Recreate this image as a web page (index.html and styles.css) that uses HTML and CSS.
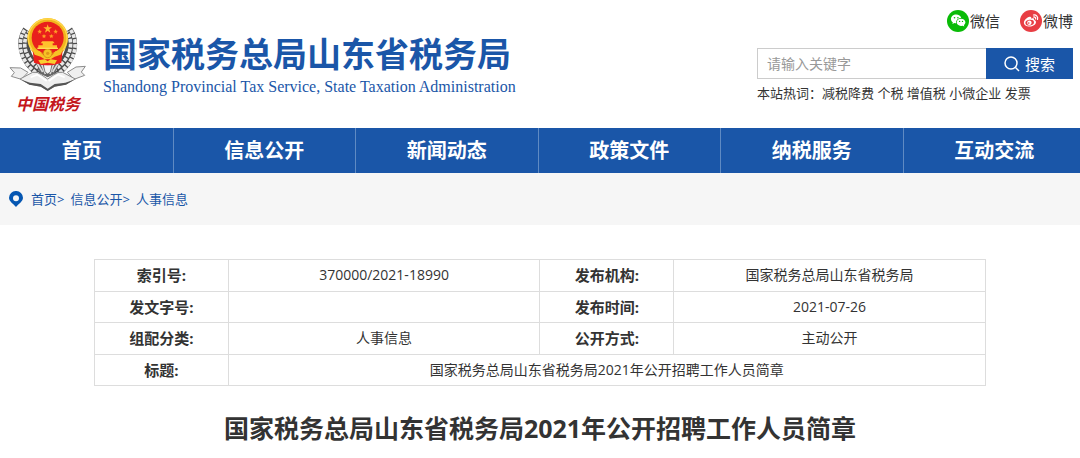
FILE: index.html
```
<!DOCTYPE html>
<html lang="zh-CN">
<head>
    <meta charset="UTF-8">
    <meta name="viewport" content="width=device-width, initial-scale=1">
    <title>国家税务总局山东省税务局</title>
    <link rel="stylesheet" href="styles.css">
</head>
<body>
<header class="header">
    <div class="logo">
        <div class="logo__mark">
            <svg class="logo__emblem" viewBox="24 48 240 228" aria-hidden="true">
                <!-- wheat ears -->
                <g fill="none" stroke="#4c4c4c" stroke-width="34">
                    <path d="M84 92C62 124 66 178 124 218"/>
                    <path d="M202 92C224 124 220 178 162 218"/>
                </g>
                <g fill="none" stroke="#e8e8e8" stroke-width="11" stroke-dasharray="11 4">
                    <path d="M74 90C50 126 56 184 116 224"/>
                    <path d="M212 90C236 126 230 184 170 224"/>
                    <path stroke-dashoffset="7" d="M86 96C64 126 70 174 126 212"/>
                    <path stroke-dashoffset="7" d="M200 96C222 126 216 174 160 212"/>
                </g>
                <path d="M104 180H182L164 222L143 232L122 222Z" fill="#666"/>
                <path d="M112 190L128 216M124 190L136 222M174 190L158 216M162 190L150 222" stroke="#ddd" stroke-width="5"/>
                <path d="M130 194H156L151 216L143 222L135 216Z" fill="#f4f4f4" stroke="#555" stroke-width="2"/>
                <!-- ribbon -->
                <g fill="#efefef" stroke="#8c8c8c" stroke-width="3" stroke-linejoin="round">
                    <path d="M30 203L62 204L84 217L64 238L34 229L43 218Z"/>
                    <path d="M256 199L228 201L202 217L222 238L254 226L244 216Z"/>
                    <path d="M60 237L98 217Q112 214 124 224L143 237L162 224Q174 214 188 217L226 237L198 252L164 258L143 271L122 258L88 252Z"/>
                </g>
                <path d="M64 239L90 248L122 252L143 266L164 252L196 248L222 239L198 254L164 260L143 273L122 260L88 254Z" fill="#555"/>
                <path d="M92 232L112 224L140 243M194 232L174 224L146 243" fill="none" stroke="#fff" stroke-width="5"/>
                <!-- national emblem -->
                <circle cx="143" cy="115" r="61" fill="#f2b51d"/>
                <circle cx="143" cy="115" r="58" fill="none" stroke="#ffd84a" stroke-width="4"/>
                <circle cx="143" cy="113" r="48" fill="#e9201c"/>
                <path d="M98 150Q143 174 188 150L184 188Q143 204 102 188Z" fill="#e9201c"/>
                <path d="M96 147L120 154Q128 168 143 168Q158 168 166 154L190 147L182 164L164 170L152 178H134L122 170L104 164Z" fill="#f7c326"/>
                <circle cx="143" cy="160" r="13" fill="#f7c326" stroke="#c9860e" stroke-width="2"/>
                <circle cx="143" cy="160" r="5" fill="#e0971a"/>
                <path d="M115 181L134 178L143 184L152 178L171 181L164 192L143 188L122 192Z" fill="#f9d02f"/>
                <path d="M143 73L146 82H156L148 88L151 98L143 92L135 98L138 88L130 82H140Z" fill="#ffb72b"/>
                <g fill="#ff9d25">
                    <path id="star" d="M119 88L121 92L126 93L122 96L123 101L119 98L115 101L116 96L112 93L117 92Z"/>
                    <use href="#star" x="48"/>
                    <use href="#star" x="13" y="14"/>
                    <use href="#star" x="35" y="14"/>
                </g>
                <path d="M127 124H159L164 130H158V136H171V145H115V136H128V130H122Z" fill="#ffc12c"/>
                <path d="M112 143H174V147H112Z" fill="#ffdd56"/>
            </svg>
            <span class="logo__script">中国税务</span>
        </div>
        <div class="logo__names">
            <div class="logo__name">国家税务总局山东省税务局</div>
            <div class="logo__english">Shandong Provincial Tax Service, State Taxation Administration</div>
        </div>
    </div>
    <div class="tools">
        <div class="social">
            <a class="social__link" href="#">
                <svg class="social__icon" viewBox="0 0 22 22" aria-hidden="true">
                    <circle cx="11" cy="11" r="11" fill="#09bb07"/>
                    <path d="M9.2 4.5C6.200 4.500 4 6.400 4 8.900C4 10.300 4.700 11.500 5.800 12.300L5.400 14L7.400 13C8 13.200 8.600 13.300 9.300 13.300C8.500 10.500 11 8 14.200 8C13.700 6 11.700 4.500 9.200 4.500Z" fill="#fff"/>
                    <path d="M14 8.700C11.500 8.700 9.700 10.300 9.700 12.300C9.700 14.400 11.500 15.900 14 15.900L15.700 15.700L17.300 16.500L16.900 15C17.800 14.400 18.400 13.400 18.400 12.300C18.400 10.300 16.500 8.700 14 8.700Z" fill="#fff"/>
                    <g fill="#09bb07">
                        <circle cx="7.500" cy="7.700" r=".8"/><circle cx="10.900" cy="7.700" r=".8"/>
                        <circle cx="12.600" cy="11.400" r=".7"/><circle cx="15.500" cy="11.400" r=".7"/>
                    </g>
                </svg>微信</a>
            <a class="social__link" href="#">
                <svg class="social__icon" viewBox="0 0 22 22" aria-hidden="true">
                    <circle cx="11" cy="11" r="11" fill="#e83e44"/>
                    <path d="M9.700 6.800C11 6.500 11.500 7.300 11.200 8.700C13 8 14.400 8.300 14.100 9.900C15.400 10.300 16.100 11.100 16 12.300C15.700 14.900 12.800 16.500 9.600 16.500C6.300 16.500 3.900 14.900 3.900 12.700C3.900 10.500 7 7.300 9.700 6.800Z" fill="#fff"/>
                    <ellipse cx="9.700" cy="12.600" rx="4.300" ry="2.900" transform="rotate(-8 9.700 12.600)" fill="#e83e44"/>
                    <circle cx="9.400" cy="12.700" r="2.200" fill="#fff"/>
                    <circle cx="8.800" cy="13.100" r=".8" fill="#e83e44"/>
                    <path d="M13.400 5C16.300 4.500 18.400 6.800 17.500 9.500M13.600 7C15 6.800 16 7.800 15.600 9" fill="none" stroke="#fff" stroke-width="1.200" stroke-linecap="round"/>
                </svg>微博</a>
        </div>
        <form class="search">
            <input class="search__input" type="text" placeholder="请输入关键字" aria-label="请输入关键字">
            <button class="search__button" type="button">
                <svg class="search__icon" viewBox="0 0 16 16" aria-hidden="true">
                    <circle cx="7" cy="7" r="6"/>
                    <path d="M11.500 11.500L15 15"/>
                </svg>搜索</button>
        </form>
        <div class="hot">本站热词：<a href="#">减税降费</a> <a href="#">个税</a> <a href="#">增值税</a> <a href="#">小微企业</a> <a href="#">发票</a></div>
    </div>
</header>
<nav class="nav">
    <div class="nav__list">
        <a class="nav__item" href="#">首页</a>
        <a class="nav__item" href="#">信息公开</a>
        <a class="nav__item" href="#">新闻动态</a>
        <a class="nav__item" href="#">政策文件</a>
        <a class="nav__item" href="#">纳税服务</a>
        <a class="nav__item" href="#">互动交流</a>
    </div>
</nav>
<div class="crumbs">
    <svg class="crumbs__pin" viewBox="0 0 14 16" aria-hidden="true">
        <path fill-rule="evenodd" d="M7 0A6.800 6.800 0 0 0 0 6.800C0 10.500 4 12.500 7 16C10 12.500 14 10.500 14 6.800A6.800 6.800 0 0 0 7 0ZM7 4.200A3 3 0 1 1 7 10.200A3 3 0 1 1 7 4.200Z"/>
    </svg>
    <span><a href="#">首页</a>&gt;</span>
    <span><a href="#">信息公开</a>&gt;</span>
    <a href="#">人事信息</a>
</div>
<main class="article">
    <table class="info">
        <colgroup>
            <col class="info__label">
            <col class="info__value">
            <col class="info__label">
            <col class="info__value">
        </colgroup>
        <tr>
            <th scope="row">索引号:</th>
            <td>370000/2021-18990</td>
            <th scope="row">发布机构:</th>
            <td>国家税务总局山东省税务局</td>
        </tr>
        <tr>
            <th scope="row">发文字号:</th>
            <td></td>
            <th scope="row">发布时间:</th>
            <td>2021-07-26</td>
        </tr>
        <tr>
            <th scope="row">组配分类:</th>
            <td>人事信息</td>
            <th scope="row">公开方式:</th>
            <td>主动公开</td>
        </tr>
        <tr>
            <th scope="row">标题:</th>
            <td colspan="3">国家税务总局山东省税务局2021年公开招聘工作人员简章</td>
        </tr>
    </table>
    <h1 class="article__title">国家税务总局山东省税务局2021年公开招聘工作人员简章</h1>
</main>
</body>
</html>
```
FILE: styles.css
```
* {
    box-sizing: border-box;
}
body {
    margin: 0;
    background: #fff;
    color: #333;
    font-family: "Open Sans", "Noto Sans CJK SC", sans-serif;
    font-size: 14px;
    line-height: 20px;
}
a {
    color: inherit;
    text-decoration: none;
}

/* header */
.header {
    display: flex;
    justify-content: space-between;
    padding: 10px 7px 12px 8px;
}
.logo {
    display: flex;
    gap: 15px;
    padding-top: 6px;
}
.logo__mark {
    display: flex;
    flex-direction: column;
    align-items: center;
}
.logo__emblem {
    width: 80px;
    height: 76px;
}
.logo__script {
    color: #c4161c;
    font-size: 16px;
    font-style: italic;
    font-weight: bold;
    line-height: 24px;
}
.logo__names {
    padding-top: 16px;
    color: #1a56a8;
    white-space: nowrap;
}
.logo__name {
    font-size: 34px;
    font-weight: bold;
    line-height: 44px;
}
.logo__english {
    font-family: "Liberation Serif", serif;
    font-size: 16px;
    line-height: 22px;
}
.tools {
    width: 316px;
}
.social {
    display: flex;
    justify-content: flex-end;
    gap: 20px;
}
.social__link {
    display: flex;
    align-items: center;
    gap: 1px;
    font-size: 15px;
}
.social__icon {
    width: 22px;
    height: 22px;
}
.search {
    display: flex;
    margin-top: 16px;
}
.search__input {
    flex: 1;
    min-width: 0;
    height: 31px;
    padding: 0 9px;
    border: 1px solid #ccc;
    border-right: 0;
    font: inherit;
}
.search__input::placeholder {
    color: #999;
}
.search__button {
    display: flex;
    align-items: center;
    justify-content: center;
    gap: 5px;
    width: 87px;
    padding: 0;
    border: 0;
    background: #1a56a8;
    color: #fff;
    font: inherit;
    font-size: 15px;
}
.search__icon {
    width: 16px;
    height: 16px;
    fill: none;
    stroke: #fff;
    stroke-width: 1.5;
}
.hot {
    margin-top: 4px;
    font-size: 13px;
    white-space: nowrap;
}

/* navigation, the outer items run past the window edges */
.nav {
    overflow: hidden;
    background: #1a56a8;
}
.nav__list {
    display: flex;
    margin: 0 -6px 0 -9px;
}
.nav__item {
    flex: 1;
    border-right: 1px solid #5f8ac3;
    color: #fff;
    font-size: 20px;
    font-weight: bold;
    line-height: 45px;
    text-align: center;
}

.crumbs {
    display: flex;
    align-items: center;
    gap: 6px;
    padding: 16px 9px;
    background: #f6f6f6;
    color: #1a56a8;
    font-size: 13px;
}
.crumbs__pin {
    width: 14px;
    height: 16px;
    margin-right: 2px;
    fill: #0657b2;
}

/* article */
.article {
    padding-top: 34px;
}
.info {
    width: 82.6%;
    height: 127px;
    margin: 0 auto;
    border-collapse: collapse;
    table-layout: fixed;
}
.info__label {
    width: 15%;
}
.info__value {
    width: 35%;
}
.info th,
.info td {
    padding: 0;
    border: 1px solid #ddd;
    text-align: center;
}
.info th {
    font-size: 15px;
}
.article__title {
    margin: 24px 0 0;
    font-size: 25px;
    line-height: 36px;
    text-align: center;
}
```
